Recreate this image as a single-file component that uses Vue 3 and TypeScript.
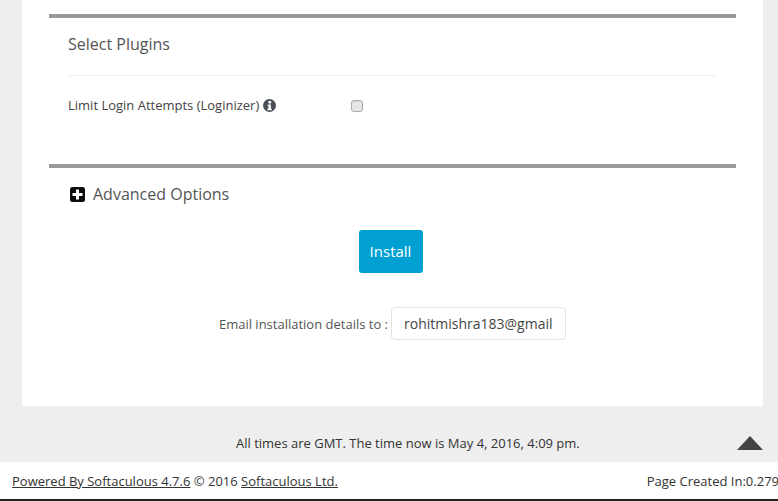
<script setup lang="ts">
const email = 'rohitmishra183@gmail.com'
</script>

<template>
  <div class="page">
    <main class="panel">
      <section class="block plugins">
        <h3 class="heading">Select Plugins</h3>
        <div class="plugin-row">
          <label class="plugin-label" for="loginizer">
            Limit Login Attempts (Loginizer)
            <svg class="info" viewBox="0 0 24 24" aria-hidden="true">
              <circle cx="12" cy="12" r="12" fill="#4a4f57" />
              <circle cx="12.5" cy="6" r="2.6" fill="#fff" />
              <path d="M8.5 10h6v8h1.8v2.6H8V18h2v-5.4H8.500z" fill="#fff" />
            </svg>
          </label>
          <input id="loginizer" class="check" type="checkbox" />
        </div>
      </section>

      <section class="block advanced">
        <svg class="plus" viewBox="0 0 15 15" aria-hidden="true">
          <rect width="15" height="15" rx="2.500" fill="#0c0c0c" />
          <path d="M6 2.500h3V6h3.500v3H9v3.500H6V9H2.500V6H6z" fill="#fff" />
        </svg>
        <span class="advanced-title">Advanced Options</span>
      </section>

      <div class="actions">
        <button class="install" type="button">Install</button>
        <div class="email-row">
          <label class="email-label" for="email">Email installation details to :</label>
          <input id="email" class="email" type="text" :value="email" />
        </div>
      </div>
    </main>

    <div class="time-row">
      <span class="time">All times are GMT. The time now is May 4, 2016, 4:09 pm.</span>
      <span class="to-top"></span>
    </div>

    <footer class="footer">
      <span><a href="#">Powered By Softaculous 4.7.6</a> © 2016 <a href="#">Softaculous Ltd.</a></span>
      <span class="created">Page Created In:0.279</span>
    </footer>
  </div>
</template>

<style>
html,
body {
  margin: 0;
  background: #eeeeee;
}
</style>

<style scoped>
.page {
  width: 778px;
  height: 501px;
  overflow: hidden;
  display: flex;
  flex-direction: column;
  background: #eeeeee;
  font-family: 'Open Sans', 'Liberation Sans', sans-serif;
  color: #333;
}

.panel {
  height: 406px;
  box-sizing: border-box;
  margin: 0 15px 0 22px;
  padding: 14px 27px 0;
  background: #fff;
}

.block {
  border-top: 4px solid #999;
}

.plugins {
  height: 146px;
  box-sizing: content-box;
  padding: 0 20px 0 19px;
}

.heading {
  margin: 0;
  padding: 15px 0 19px;
  height: 23px;
  line-height: 23px;
  font-size: 16px;
  font-weight: 500;
  color: #555;
  border-bottom: 1px solid #eee;
}

.plugin-row {
  display: flex;
  align-items: center;
  height: 30px;
  margin-top: 14px;
}

.plugin-label {
  display: flex;
  align-items: center;
  gap: 4px;
  width: 283px;
  font-size: 13px;
  font-weight: 500;
  color: #444;
}

.info {
  width: 13px;
  height: 13px;
  margin-top: 1px;
}

.check {
  appearance: none;
  width: 12px;
  height: 12px;
  margin: 2px 0 0;
  border: 1px solid #aaa;
  border-radius: 3px;
  background: #e6e6e6;
  box-shadow: inset 0 1px 1px rgba(0, 0, 0, 0.08);
}

.advanced {
  display: flex;
  align-items: center;
  gap: 8px;
  height: 52px;
  padding: 0 0 0 21px;
}

.plus {
  width: 15px;
  height: 15px;
}

.advanced-title {
  font-size: 16px;
  font-weight: 500;
  color: #555;
}

.actions {
  display: flex;
  flex-direction: column;
  align-items: center;
  margin-top: 10px;
  gap: 34px;
}

.install {
  width: 64px;
  height: 43px;
  margin-right: 4px;
  padding: 0 0 2px;
  border: 0;
  border-radius: 3px;
  background: #00a0d2;
  color: #fff;
  font: 400 15px 'Open Sans', 'Liberation Sans', sans-serif;
}

.email-row {
  display: flex;
  align-items: center;
  gap: 3px;
}

.email-label {
  font-size: 13px;
  font-weight: 500;
  color: #555;
}

.email {
  width: 175px;
  height: 33px;
  box-sizing: border-box;
  padding: 0 12px 0 12px;
  border: 1px solid #e3e3e3;
  border-radius: 4px;
  color: #444;
  font: 400 14px 'Open Sans', 'Liberation Sans', sans-serif;
  outline: none;
}

.time-row {
  display: flex;
  align-items: center;
  height: 56px;
  padding: 0 15px 0 236px;
}

.time {
  font-size: 13px;
  color: #333;
  margin-top: 18px;
}

.to-top {
  margin-left: auto;
  margin-top: 18px;
  width: 0;
  height: 0;
  border-left: 13px solid transparent;
  border-right: 13px solid transparent;
  border-bottom: 14px solid #444;
}

.footer {
  display: flex;
  justify-content: space-between;
  align-items: center;
  height: 37px;
  padding: 0 0 0 12px;
  background: #fff;
  border-bottom: 2px solid #222;
  font-size: 13px;
  color: #333;
}

.footer a {
  color: #333;
}

.created {
  margin-right: -1px;
  white-space: nowrap;
}
</style>
